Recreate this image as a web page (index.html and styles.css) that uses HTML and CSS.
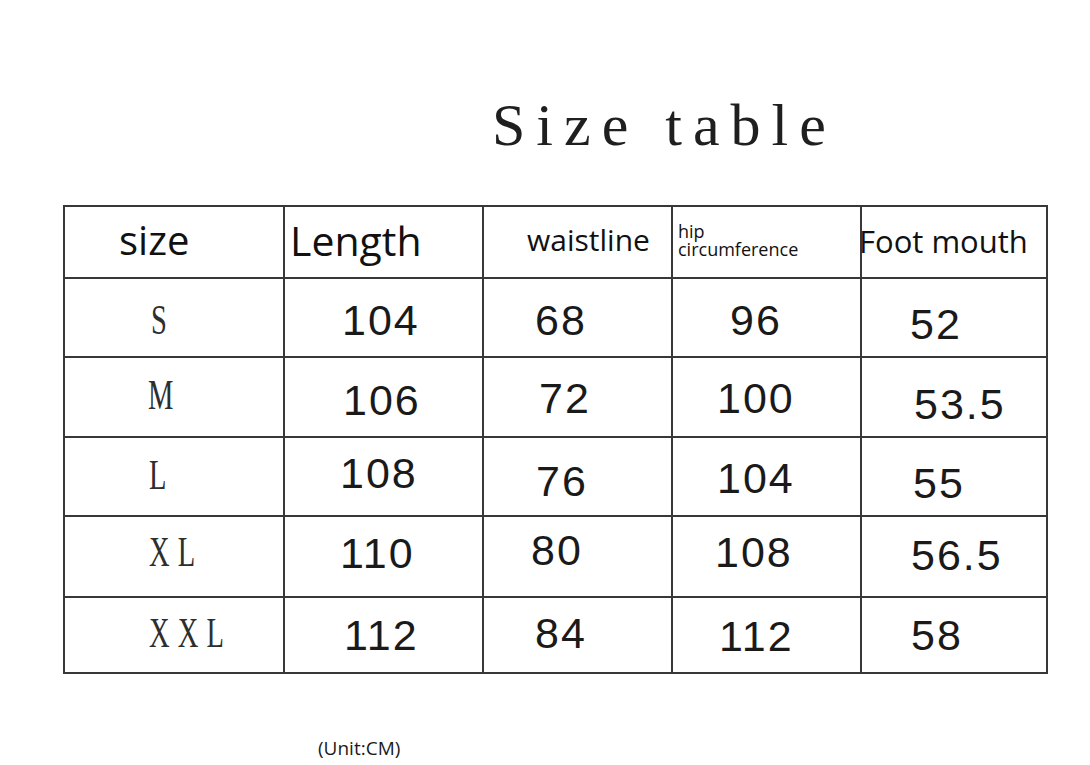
FILE: index.html
```html
<!DOCTYPE html>
<html lang="en">
<head>
<meta charset="utf-8">
<title>Size table</title>
<link rel="stylesheet" href="styles.css">
</head>
<body>
<div class="page">
  <h1 class="title">Size table</h1>
  <div class="table">
    <div class="row r-h">
      <div class="cell">size</div>
      <div class="cell">Length</div>
      <div class="cell">waistline</div>
      <div class="cell"><span class="l1">hip</span><span class="l2">circumference</span></div>
      <div class="cell">Foot mouth</div>
    </div>
    <div class="row r-s">
      <div class="cell lbl"><span>S</span></div>
      <div class="cell">104</div>
      <div class="cell">68</div>
      <div class="cell">96</div>
      <div class="cell">52</div>
    </div>
    <div class="row r-m">
      <div class="cell lbl"><span>M</span></div>
      <div class="cell">106</div>
      <div class="cell">72</div>
      <div class="cell">100</div>
      <div class="cell">53.5</div>
    </div>
    <div class="row r-l">
      <div class="cell lbl"><span>L</span></div>
      <div class="cell">108</div>
      <div class="cell">76</div>
      <div class="cell">104</div>
      <div class="cell">55</div>
    </div>
    <div class="row r-xl">
      <div class="cell lbl"><span>XL</span></div>
      <div class="cell">110</div>
      <div class="cell">80</div>
      <div class="cell">108</div>
      <div class="cell">56.5</div>
    </div>
    <div class="row r-xxl">
      <div class="cell lbl"><span>XXL</span></div>
      <div class="cell">112</div>
      <div class="cell">84</div>
      <div class="cell">112</div>
      <div class="cell">58</div>
    </div>
  </div>
  <p class="unit">(Unit:CM)</p>
</div>
</body>
</html>
```

FILE: styles.css
```css
* { box-sizing: border-box; }

body {
  margin: 0;
  background: #ffffff;
}

.page {
  width: 1090px;
  height: 765px;
  overflow: hidden;
  background: #ffffff;
  color: #1c1c1c;
}

.title {
  margin: 0;
  height: 155px;
  padding: 95px 0 0 492px;
  font: normal 60px/60px "Liberation Serif", "Times New Roman", serif;
  letter-spacing: 11px;
  white-space: pre;
  color: #1f1f1f;
}

.table {
  margin: 50px 0 0 63px;
  width: 985px;
  border-top: 2px solid #383838;
  border-left: 2px solid #383838;
}

.row {
  display: grid;
  grid-template-columns: 220px 199px 189px 189px 186px;
}

.cell {
  border-right: 2px solid #383838;
  border-bottom: 2px solid #383838;
  font: normal 43px/43px "Liberation Sans", Arial, sans-serif;
  letter-spacing: 2px;
  white-space: nowrap;
  color: #1a1a1a;
}

/* header row */
.r-h { height: 72px; }
.r-h .cell {
  font-family: "Open Sans", "Liberation Sans", sans-serif;
  letter-spacing: 0;
  color: #111111;
}
.r-h .cell:nth-child(1) { font-size: 40px; line-height: 40px; padding: 13px 0 0 54px; }
.r-h .cell:nth-child(2) { font-size: 41px; line-height: 41px; padding: 13px 0 0 5px; }
.r-h .cell:nth-child(3) { font-size: 30px; line-height: 30px; padding: 18px 0 0 43px; }
.r-h .cell:nth-child(4) {
  display: flex;
  flex-direction: column;
  font-size: 18px;
  line-height: 17.7px;
  padding: 16px 0 0 5px;
}
.r-h .cell:nth-child(5) { font-size: 31px; line-height: 31px; padding: 19px 0 0 0; text-indent: -3px; }

/* size labels */
.lbl span {
  display: inline-block;
  font: normal 42px/42px "Liberation Serif", "Times New Roman", serif;
  letter-spacing: 12px;
  color: #2e2e2e;
  transform: scaleX(0.68);
  transform-origin: 0 0;
}

.r-s { height: 79px; }
.r-m { height: 80px; }
.r-l { height: 79px; }
.r-xl { height: 81px; }
.r-xxl { height: 76px; }

.r-s .cell:nth-child(1) { padding: 19px 0 0 86px; }
.r-s .cell:nth-child(2) { padding: 20px 0 0 57px; }
.r-s .cell:nth-child(3) { padding: 20px 0 0 51px; }
.r-s .cell:nth-child(4) { padding: 20px 0 0 57px; }
.r-s .cell:nth-child(5) { padding: 24px 0 0 48px; }

.r-m .cell:nth-child(1) { padding: 15px 0 0 83px; }
.r-m .cell:nth-child(2) { padding: 21px 0 0 58px; }
.r-m .cell:nth-child(3) { padding: 19px 0 0 55px; }
.r-m .cell:nth-child(4) { padding: 19px 0 0 44px; }
.r-m .cell:nth-child(5) { padding: 25px 0 0 52px; }

.r-l .cell:nth-child(1) { padding: 15px 0 0 84px; }
.r-l .cell:nth-child(2) { padding: 14px 0 0 55px; }
.r-l .cell:nth-child(3) { padding: 22px 0 0 52px; }
.r-l .cell:nth-child(4) { padding: 19px 0 0 44px; }
.r-l .cell:nth-child(5) { padding: 24px 0 0 51px; }

.r-xl .cell:nth-child(1) { padding: 13px 0 0 84px; }
.r-xl .cell:nth-child(2) { padding: 15px 0 0 55px; }
.r-xl .cell:nth-child(3) { padding: 12px 0 0 47px; }
.r-xl .cell:nth-child(4) { padding: 14px 0 0 42px; }
.r-xl .cell:nth-child(5) { padding: 17px 0 0 49px; }

.r-xxl .cell:nth-child(1) { padding: 13px 0 0 84px; }
.r-xxl .cell:nth-child(2) { padding: 16px 0 0 59px; }
.r-xxl .cell:nth-child(3) { padding: 14px 0 0 51px; }
.r-xxl .cell:nth-child(4) { padding: 17px 0 0 46px; }
.r-xxl .cell:nth-child(5) { padding: 16px 0 0 49px; }

.unit {
  margin: 65px 0 0 318px;
  font: normal 19px/19px "Open Sans", "Liberation Sans", sans-serif;
  color: #1a1a1a;
}
```
